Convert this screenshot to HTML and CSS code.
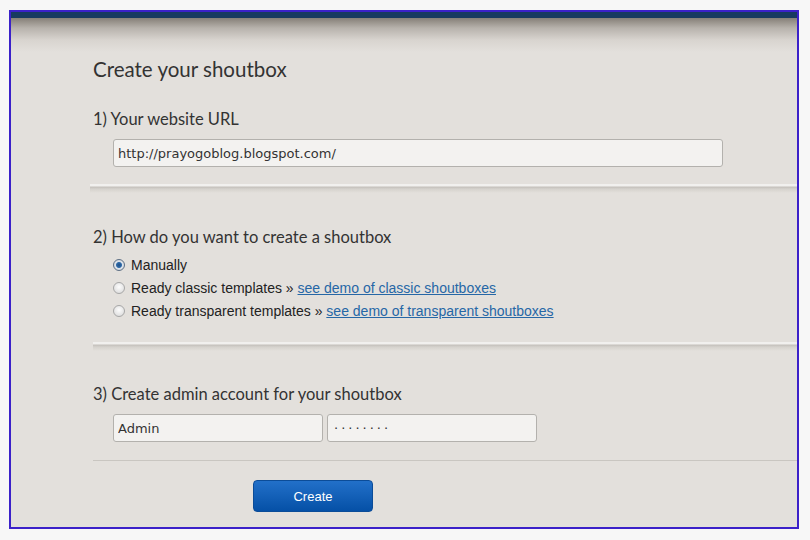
FILE: index.html
```html
<!DOCTYPE html>
<html lang="en">
<head>
    <meta charset="UTF-8">
    <meta name="viewport" content="width=device-width, initial-scale=1.0">
    <title>Create your shoutbox</title>
    <link rel="stylesheet" href="styles.css">
</head>
<body>
    <div class="frame">
        <div class="topbar"></div>

        <form class="panel" onsubmit="return false;">
            <h1 class="title">Create your shoutbox</h1>

            <section class="step step-url">
                <h2>1) Your website URL</h2>
                <input class="field field-url" type="text" value="http://prayogoblog.blogspot.com/">
            </section>
            <div class="divider divider-first"></div>

            <section class="step step-type">
                <h2>2) How do you want to create a shoutbox</h2>
                <label class="choice">
                    <input type="radio" name="kind" checked>
                    <span>Manually</span>
                </label>
                <label class="choice">
                    <input type="radio" name="kind">
                    <span>Ready classic templates &raquo; <a href="#">see demo of classic shoutboxes</a></span>
                </label>
                <label class="choice">
                    <input type="radio" name="kind">
                    <span>Ready transparent templates &raquo; <a href="#">see demo of transparent shoutboxes</a></span>
                </label>
            </section>
            <div class="divider divider-second"></div>

            <section class="step step-admin">
                <h2>3) Create admin account for your shoutbox</h2>
                <div class="field-row">
                    <input class="field field-half" type="text" value="Admin">
                    <input class="field field-half field-pass" type="text" value="········">
                </div>
            </section>
            <div class="rule"></div>

            <div class="actions">
                <button type="submit">Create</button>
            </div>
        </form>
    </div>
</body>
</html>
```

FILE: styles.css
```css
body {
    margin: 0;
    background-color: #f7f7f7;
    font-family: "Liberation Sans", Arial, sans-serif;
}
.frame {
    margin: 10px 11px 0 9px;
    height: 519px;
    box-sizing: border-box;
    border: 2px solid #3b21c9;
    background-color: #e3e0dc;
    overflow: hidden;
}
.topbar {
    height: 6px;
    background-color: #173a60;
}
.panel {
    padding: 37px 0 0 82px;
    background: linear-gradient(#857f77 0, #b7b2ac 10px, #d8d4cf 22px, #e3e0dc 34px, #e3e0dc 100%);
}
.title {
    margin: 0 0 26px;
    font-family: Lato, "Open Sans", sans-serif;
    font-size: 20.5px;
    font-weight: 400;
    line-height: 28px;
    color: #333;
}
.step h2 {
    margin: 0 0 10px;
    font-family: Lato, "Open Sans", sans-serif;
    font-size: 16.5px;
    font-weight: 400;
    line-height: 20px;
    color: #333;
}
.step-type h2 {
    margin-bottom: 6px;
}
.field {
    box-sizing: border-box;
    height: 28px;
    margin: 0;
    padding: 0 4px;
    border: 1px solid #b3b1ad;
    border-radius: 3px;
    background-color: #f3f2f0;
    font-family: "DejaVu Sans", Verdana, sans-serif;
    font-size: 13px;
    color: #333;
}
.field-url {
    width: 610px;
    margin-left: 20px;
}
.field-row {
    display: flex;
    gap: 4px;
    margin-left: 20px;
}
.field-half {
    width: 210px;
}
.field-pass {
    padding-left: 6px;
    letter-spacing: 3px;
}
.divider {
    height: 9px;
    margin: 17px 0 34px -3px;
    background: linear-gradient(#f1f0ee 0, #f1f0ee 2px, #c4c0bb 3px, #d5d2cd 5px, #e3e0dc 9px);
}
.divider-second {
    margin: 20px 0 33px 0;
}
.choice {
    display: flex;
    align-items: center;
    gap: 6px;
    height: 23px;
    margin-left: 20px;
    font-size: 14px;
    color: #222;
}
.choice input {
    appearance: none;
    width: 12px;
    height: 12px;
    margin: 0;
    border: 1px solid #a7a7a7;
    border-radius: 50%;
    background: radial-gradient(circle at 50% 40%, #fdfdfd, #d6d6d6);
}
.choice input:checked {
    border-color: #5d6f84;
    background: radial-gradient(circle, #1f4f85 0, #2f6aa8 2.5px, #dde3ea 3.5px, #c9d0d8 100%);
}
.choice a {
    color: #2667a6;
}
.rule {
    height: 1px;
    margin: 18px 0 19px 0;
    background-color: #c9c6c1;
}
.actions {
    padding-left: 160px;
}
button {
    width: 120px;
    height: 32px;
    border: 1px solid #0b4c98;
    border-radius: 4px;
    background: linear-gradient(#2270c9, #0550a6);
    font-family: "Liberation Sans", Arial, sans-serif;
    font-size: 13px;
    color: #fff;
    cursor: pointer;
}
```
